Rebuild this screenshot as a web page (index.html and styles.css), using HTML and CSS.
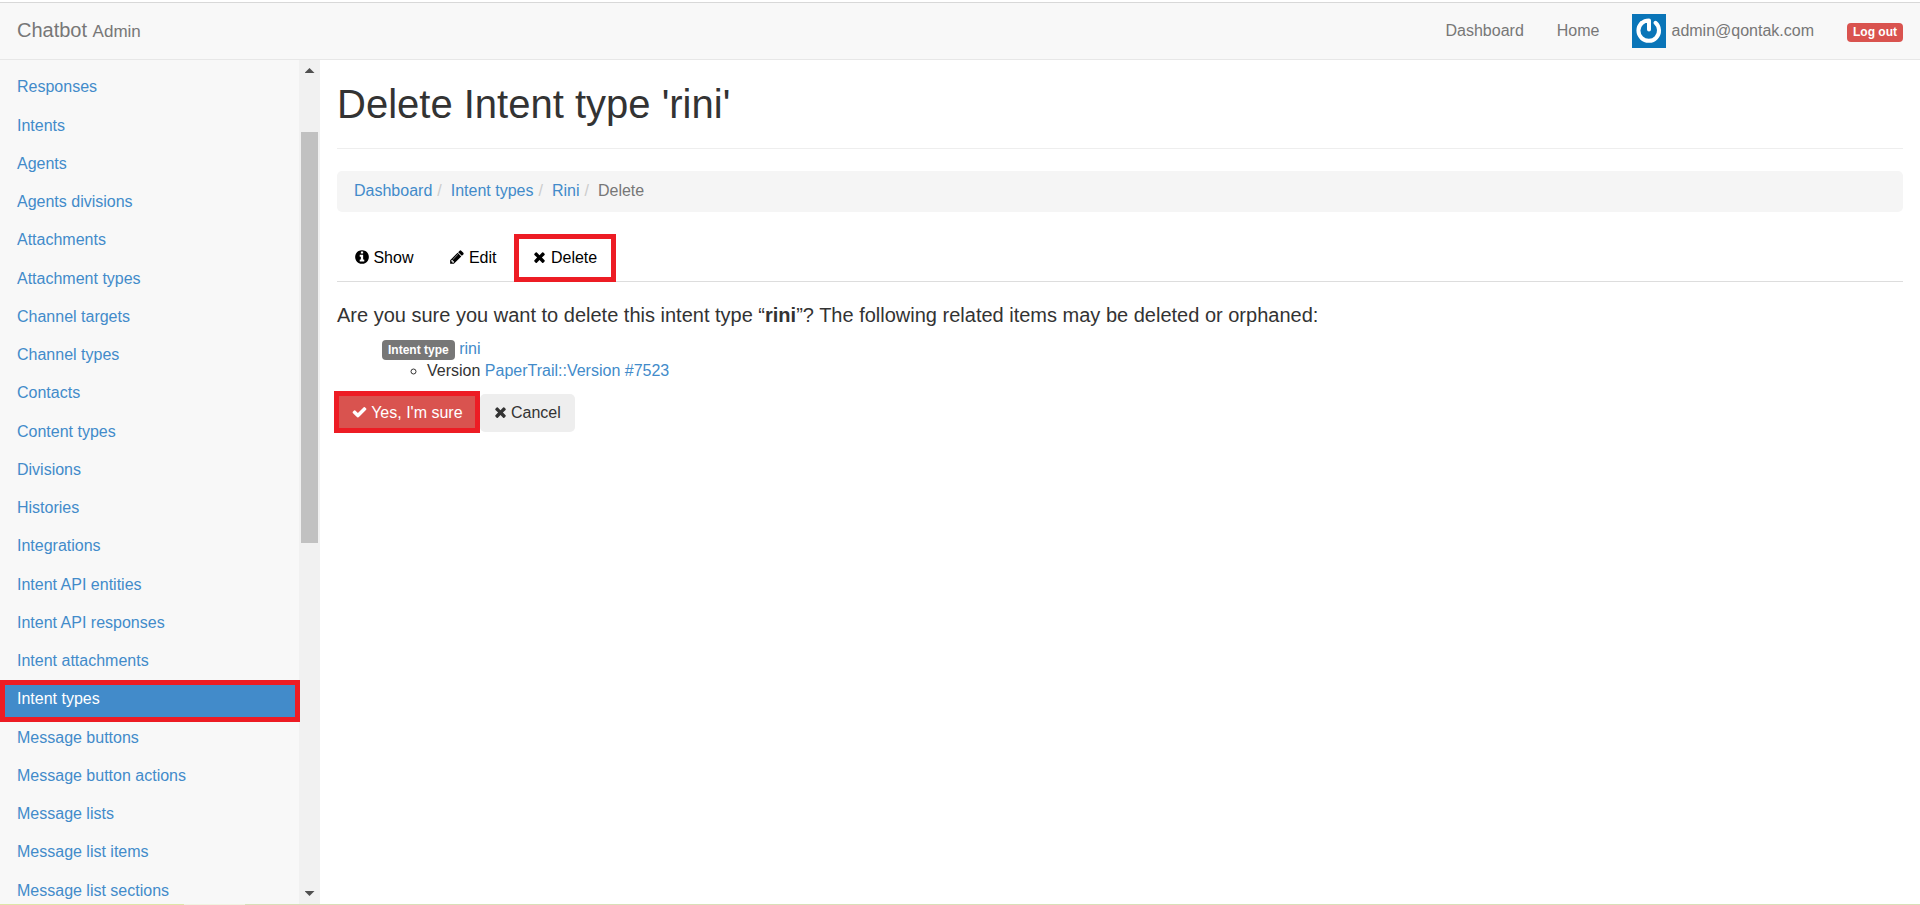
FILE: index.html
```html
<!DOCTYPE html>
<html lang="en">
<head>
<meta charset="utf-8">
<title>Delete Intent type 'rini' | Chatbot Admin</title>
<link rel="stylesheet" href="styles.css">
</head>
<body>
<svg class="sprite" aria-hidden="true">
  <symbol id="info" viewBox="128 0 1536 1792"><path d="M1152 1376v-160q0-14-9-23t-23-9h-96v-512q0-14-9-23t-23-9h-320q-14 0-23 9t-9 23v160q0 14 9 23t23 9h96v320h-96q-14 0-23 9t-9 23v160q0 14 9 23t23 9h448q14 0 23-9t9-23zm-128-896v-160q0-14-9-23t-23-9h-192q-14 0-23 9t-9 23v160q0 14 9 23t23 9h192q14 0 23-9t9-23zm640 416q0 209-103 385.5t-279.5 279.5-385.5 103-385.5-103-279.5-279.5-103-385.5 103-385.5 279.5-279.5 385.5-103 385.5 103 279.5 279.5 103 385.5z"/></symbol>
  <symbol id="pencil" viewBox="128 0 1536 1792"><path d="M491 1536l91-91-235-235-91 91v107h128v128h107zm523-928q0-22-22-22-10 0-17 7l-542 542q-7 7-7 17 0 22 22 22 10 0 17-7l542-542q7-7 7-17zm-54-192l416 416-832 832h-416v-416zm683 96q0 53-37 90l-166 166-416-416 166-165q36-38 90-38 53 0 91 38l235 234q37 39 37 91z"/></symbol>
  <symbol id="times" viewBox="192 0 1408 1792"><path d="M1490 1322q0 40-28 68l-136 136q-28 28-68 28t-68-28l-294-294-294 294q-28 28-68 28t-68-28l-136-136q-28-28-28-68t28-68l294-294-294-294q-28-28-28-68t28-68l136-136q28-28 68-28t68 28l294 294 294-294q28-28 68-28t68 28l136 136q28 28 28 68t-28 68l-294 294 294 294q28 28 28 68z"/></symbol>
  <symbol id="check" viewBox="64 0 1664 1792"><path d="M1671 566q0 40-28 68l-724 724-136 136q-28 28-68 28t-68-28l-136-136-362-362q-28-28-28-68t28-68l136-136q28-28 68-28t68 28l294 295 656-657q28-28 68-28t68 28l136 136q28 28 28 68z"/></symbol>
</svg>
<header class="navbar">
  <a class="brand" href="#">Chatbot <small>Admin</small></a>
  <nav class="top-links">
    <a href="#">Dashboard</a>
    <a href="#">Home</a>
    <a class="user" href="#">
      <svg class="avatar" viewBox="0 0 34 34" aria-hidden="true">
        <rect width="34" height="34" fill="#0a75b8"/>
        <path d="M9.5 9.2A10.3 10.3 0 1 0 23.5 8.8" fill="none" stroke="#fff" stroke-width="4" stroke-linecap="round"/>
        <path d="M9.5 9.2Q12.5 6.4 17 6.4V15.6" fill="none" stroke="#fff" stroke-width="4" stroke-linecap="round" stroke-linejoin="round"/>
      </svg>
      <span>admin@qontak.com</span>
    </a>
    <a href="#"><span class="label label-danger">Log out</span></a>
  </nav>
</header>
<div class="page">
  <aside class="sidebar">
    <ul class="menu">
      <li><a href="#">Responses</a></li>
      <li><a href="#">Intents</a></li>
      <li><a href="#">Agents</a></li>
      <li><a href="#">Agents divisions</a></li>
      <li><a href="#">Attachments</a></li>
      <li><a href="#">Attachment types</a></li>
      <li><a href="#">Channel targets</a></li>
      <li><a href="#">Channel types</a></li>
      <li><a href="#">Contacts</a></li>
      <li><a href="#">Content types</a></li>
      <li><a href="#">Divisions</a></li>
      <li><a href="#">Histories</a></li>
      <li><a href="#">Integrations</a></li>
      <li><a href="#">Intent API entities</a></li>
      <li><a href="#">Intent API responses</a></li>
      <li><a href="#">Intent attachments</a></li>
      <li class="active"><a href="#">Intent types</a></li>
      <li><a href="#">Message buttons</a></li>
      <li><a href="#">Message button actions</a></li>
      <li><a href="#">Message lists</a></li>
      <li><a href="#">Message list items</a></li>
      <li><a href="#">Message list sections</a></li>
    </ul>
    <div class="scrollbar" aria-hidden="true">
      <span class="arrow up"></span>
      <span class="above"></span>
      <span class="thumb"></span>
      <span class="below"></span>
      <span class="arrow down"></span>
    </div>
  </aside>
  <main class="content">
    <h1>Delete Intent type 'rini'</h1>
    <ol class="breadcrumb">
      <li><a href="#">Dashboard</a></li>
      <li><a href="#">Intent types</a></li>
      <li><a href="#">Rini</a></li>
      <li class="current">Delete</li>
    </ol>
    <ul class="tabs">
      <li><a href="#"><svg class="icon"><use href="#info"/></svg> Show</a></li>
      <li><a href="#"><svg class="icon"><use href="#pencil"/></svg> Edit</a></li>
      <li class="marked"><a href="#"><svg class="icon narrow"><use href="#times"/></svg> Delete</a></li>
    </ul>
    <h4>Are you sure you want to delete this intent type “<strong>rini</strong>”? The following related items may be deleted or orphaned:</h4>
    <ul class="related">
      <li><span class="label label-default">Intent type</span> <a href="#">rini</a>
        <ul>
          <li>Version <a href="#">PaperTrail::Version #7523</a></li>
        </ul>
      </li>
    </ul>
    <form class="actions">
      <button class="btn btn-danger" type="button"><svg class="icon wide"><use href="#check"/></svg> Yes, I'm sure</button>
      <button class="btn" type="button"><svg class="icon narrow"><use href="#times"/></svg> Cancel</button>
    </form>
  </main>
</div>
<div class="window-edge"></div>
</body>
</html>
```
FILE: styles.css
```css
* { box-sizing: border-box; }

body {
  margin: 0;
  height: 100vh;
  display: flex;
  flex-direction: column;
  overflow: hidden;
  background: #fff;
  color: #333;
  font: 16px/20px "Liberation Sans", Arial, sans-serif;
}

a { color: #428bca; text-decoration: none; }
ul, ol { margin: 0; padding: 0; list-style: none; }

.sprite { position: absolute; width: 0; height: 0; }

.icon { width: 14px; height: 16px; fill: currentColor; vertical-align: -2px; }
.icon.narrow { width: 13px; }
.icon.wide { width: 15px; }

/* Top bar */
.navbar {
  flex: none;
  display: flex;
  justify-content: space-between;
  align-items: center;
  height: 58px;
  margin-top: 2px;
  padding: 0 17px;
  background: #f8f8f8;
  border-top: 1px solid #d8d8d8;
  border-bottom: 1px solid #e7e7e7;
}
.navbar a { color: #777; }
.brand { font-size: 20px; }
.brand small { font-size: 17px; }
.top-links { display: flex; align-items: center; gap: 33px; }
.user { display: flex; align-items: center; gap: 5px; }
.avatar { width: 34px; height: 34px; }

.label {
  display: inline-block;
  padding: 3px 6px;
  border-radius: 4px;
  color: #fff;
  font-size: 12px;
  font-weight: bold;
  line-height: 13px;
}
.navbar .label { color: #fff; }
.label-danger { background: #d9534f; }
.label-default { background: #777; line-height: 14px; }

/* Sidebar */
.page { flex: 1; min-height: 0; display: flex; }
.sidebar { flex: none; display: flex; width: 16.6667%; background: #f8f8f8; }
.menu { flex: 1; padding-top: 8px; overflow-x: visible; overflow-y: clip; }
.menu li { position: relative; }
.menu li:nth-child(4n+1) { margin-bottom: 1px; }
.menu a { display: block; padding: 9px 17px; }
.menu .active a { background: #428bca; color: #fff; }
.menu .active::after {
  content: "";
  position: absolute;
  z-index: 1;
  inset: 0 -1px -4px 0;
  border: 5px solid #ed1c24;
  background: linear-gradient(#428bca, #428bca) bottom / 100% 4px no-repeat;
}

.scrollbar {
  flex: none;
  display: flex;
  flex-direction: column;
  width: 21px;
  padding: 8px 2px;
  background: #f1f1f1;
}
.arrow { align-self: center; width: 10px; height: 5px; background: #505050; }
.up { clip-path: polygon(50% 0, 100% 100%, 0 100%); }
.down { clip-path: polygon(0 0, 100% 0, 50% 100%); }
.above { flex: 59; }
.thumb { flex: 411; background: #c1c1c1; }
.below { flex: 348; }

/* Main column */
.content { flex: 1; padding: 0 17px; }
h1 {
  margin: 0 0 22px;
  padding: 22px 0;
  border-bottom: 1px solid #eee;
  font-size: 40px;
  font-weight: normal;
  line-height: 44px;
}
.breadcrumb {
  display: flex;
  margin-bottom: 22px;
  padding: 10px 17px 11px;
  background: #f5f5f5;
  border-radius: 5px;
}
.breadcrumb li + li::before { content: "/"; padding: 0 9px 0 5px; color: #ccc; }
.breadcrumb .current { color: #777; }

.tabs { display: flex; gap: 2px; border-bottom: 1px solid #ddd; }
.tabs li { position: relative; }
.tabs a { display: block; padding: 14px 17px 13px 18px; color: #000; }
.marked::after {
  content: "";
  position: absolute;
  inset: 0 -2px -1px -1px;
  border: 5px solid #ed1c24;
}

h4 { margin: 22px 0 12px; font-size: 20px; font-weight: normal; line-height: 22px; }

.related { padding-left: 45px; line-height: 22px; }
.related ul { padding-left: 45px; list-style: circle; }

.actions { display: flex; gap: 2px; margin-top: 12px; }
.btn {
  position: relative;
  padding: 9px 14px;
  border: 0;
  border-radius: 5px;
  background: #eee;
  color: #333;
  font: inherit;
}
.btn-danger { padding: 9px 15px; background: #d9534f; color: #fff; }
.btn-danger::after {
  content: "";
  position: absolute;
  inset: -3px -2px -1px -3px;
  border: 5px solid #ed1c24;
}

.window-edge {
  flex: none;
  height: 1px;
  background: linear-gradient(90deg, #dfe5a8 184px, #f1f3e0 184px 245px, #d9dfb8 245px);
}
```
